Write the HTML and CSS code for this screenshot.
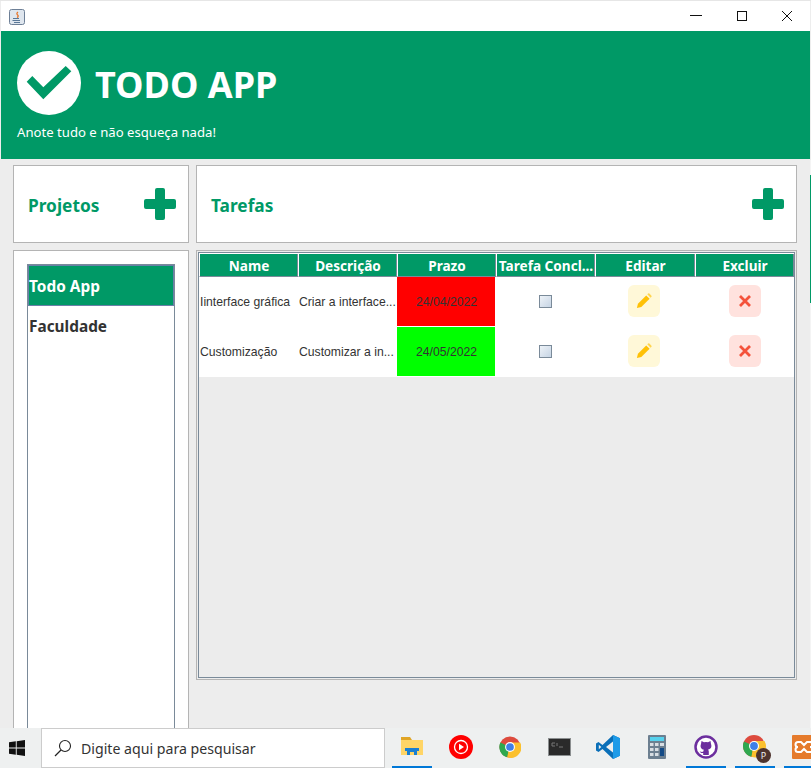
FILE: index.html
```html
<!DOCTYPE html>
<html lang="pt-BR">
<head>
  <meta charset="UTF-8">
  <meta name="viewport" content="width=device-width,initial-scale=1">
  <title>Todo App</title>
  <link rel="stylesheet" href="styles.css">
</head>
<body>

<div class="window">
  <div class="titlebar">
    <svg class="java-icon" width="16" height="16" viewBox="0 0 16 16">
      <rect x="0.5" y="0.5" width="15" height="15" rx="2" fill="#dfe6ee" stroke="#6d7f96"/>
      <path d="M9 3c-2 1.500-1 2.500 0 3.500.5.700 0 1.500-1 2" fill="none" stroke="#e8762c" stroke-width="1.300"/>
      <path d="M4 9.500h6M3.500 11.500h7.500M5 13.500h6" stroke="#5a7898" stroke-width="1"/>
    </svg>
    <div class="win-btns">
      <svg width="12" height="12" viewBox="0 0 12 12"><path d="M0 5.500h12" stroke="#111" stroke-width="1"/></svg>
      <svg width="10" height="10" viewBox="0 0 10 10"><rect x="0.500" y="0.500" width="9" height="9" fill="none" stroke="#111"/></svg>
      <svg width="10" height="10" viewBox="0 0 10 10"><path d="M0 0l10 10M10 0L0 10" stroke="#111" stroke-width="1"/></svg>
    </div>
  </div>

  <header class="app-header">
    <div class="brand">
      <svg width="64" height="64" viewBox="0 0 64 64">
        <circle cx="32" cy="32" r="32" fill="#fff"/>
        <path d="M9.700 30.700L15.300 25l11 11.300L48.700 15l5.600 5.300-28 28z" fill="#009966"/>
      </svg>
      <h1>TODO APP</h1>
    </div>
    <p class="slogan">Anote tudo e não esqueça nada!</p>
  </header>

  <main class="content">
    <section class="card card-head">
      <h2>Projetos</h2>
      <svg class="plus" width="32" height="32" viewBox="0 0 32 32"><path d="M11 2a2 2 0 0 1 2-2h6a2 2 0 0 1 2 2v9h9a2 2 0 0 1 2 2v6a2 2 0 0 1-2 2h-9v9a2 2 0 0 1-2 2h-6a2 2 0 0 1-2-2v-9H2a2 2 0 0 1-2-2v-6a2 2 0 0 1 2-2h9z" fill="#009966"/></svg>
    </section>
    <section class="card card-head">
      <h2>Tarefas</h2>
      <svg class="plus" width="32" height="32" viewBox="0 0 32 32"><path d="M11 2a2 2 0 0 1 2-2h6a2 2 0 0 1 2 2v9h9a2 2 0 0 1 2 2v6a2 2 0 0 1-2 2h-9v9a2 2 0 0 1-2 2h-6a2 2 0 0 1-2-2v-9H2a2 2 0 0 1-2-2v-6a2 2 0 0 1 2-2h9z" fill="#009966"/></svg>
    </section>

    <section class="card card-list">
      <ul class="project-list">
        <li class="selected">Todo App</li>
        <li>Faculdade</li>
      </ul>
    </section>

    <section class="table-col">
      <div class="table-frame">
        <table class="tasks">
          <thead>
            <tr><th>Name</th><th>Descrição</th><th>Prazo</th><th>Tarefa Concl...</th><th>Editar</th><th>Excluir</th></tr>
          </thead>
          <tbody>
            <tr>
              <td>Iinterface gráfica</td>
              <td>Criar a interface...</td>
              <td class="deadline late">24/04/2022</td>
              <td class="center"><span class="check"></span></td>
              <td class="center">
                <span class="action edit">
                  <svg width="16" height="16" viewBox="0 0 18 18"><path d="M1 17l1.200-5L11.500 2.700l3.800 3.800L6 15.800z" fill="#ffc107"/><path d="M12.700 1.500l1-.9a1 1 0 0 1 1.300 0l2.400 2.400a1 1 0 0 1 0 1.300l-1 1z" fill="#ffd54f"/></svg>
                </span>
              </td>
              <td class="center">
                <span class="action del">
                  <svg width="12" height="12" viewBox="0 0 12 12"><path d="M1 1l10 10M11 1L1 11" stroke="#f4523b" stroke-width="2.800"/></svg>
                </span>
              </td>
            </tr>
            <tr>
              <td>Customização</td>
              <td>Customizar a in...</td>
              <td class="deadline ok">24/05/2022</td>
              <td class="center"><span class="check"></span></td>
              <td class="center">
                <span class="action edit">
                  <svg width="16" height="16" viewBox="0 0 18 18"><path d="M1 17l1.200-5L11.500 2.700l3.800 3.800L6 15.800z" fill="#ffc107"/><path d="M12.700 1.500l1-.9a1 1 0 0 1 1.300 0l2.400 2.400a1 1 0 0 1 0 1.300l-1 1z" fill="#ffd54f"/></svg>
                </span>
              </td>
              <td class="center">
                <span class="action del">
                  <svg width="12" height="12" viewBox="0 0 12 12"><path d="M1 1l10 10M11 1L1 11" stroke="#f4523b" stroke-width="2.800"/></svg>
                </span>
              </td>
            </tr>
          </tbody>
        </table>
      </div>
    </section>
  </main>

  <footer class="taskbar">
    <svg class="win-logo" width="16" height="16" viewBox="0 0 16 16"><path d="M0 2.300l6.800-1v6.300H0zM7.700 1.200L16 0v7.600H7.700zM0 8.400h6.800v6.300l-6.800-1zM7.700 8.400H16V16l-8.300-1.200z" fill="#111"/></svg>
    <div class="search">
      <svg width="18" height="18" viewBox="0 0 18 18"><circle cx="11" cy="7" r="5.500" fill="none" stroke="#222" stroke-width="1.100"/><path d="M7 11l-6 6" stroke="#222" stroke-width="1.300"/></svg>
      <span>Digite aqui para pesquisar</span>
    </div>
    <div class="tray">
      <div class="app running">
        <svg width="22" height="20" viewBox="0 0 22 20"><path d="M0 0h9l2 3H0z" fill="#e0a526"/><path d="M0 3h22v15H0z" fill="#ffd566"/><path d="M4 11h14v3h-2v4h-3v-3H9v3H6v-4H4z" fill="#1a7fd1"/></svg>
      </div>
      <div class="app">
        <svg width="24" height="24" viewBox="0 0 24 24"><circle cx="12" cy="12" r="12" fill="#f00"/><circle cx="12" cy="12" r="6.500" fill="none" stroke="#fff" stroke-width="1.300"/><path d="M10 8.800v6.400l5-3.200z" fill="#fff"/></svg>
      </div>
      <div class="app">
        <svg width="22" height="22" viewBox="0 0 24 24"><circle cx="12" cy="12" r="11.500" fill="#dd4b3e"/><path d="M12 12L1.500 7A11.500 11.500 0 0 0 9 23.200z" fill="#2fa84f"/><path d="M12 7h11a11.500 11.500 0 0 1-14 16.200z" fill="#fbc02d"/><circle cx="12" cy="12" r="5.400" fill="#fff"/><circle cx="12" cy="12" r="4.200" fill="#3f7fe8"/></svg>
      </div>
      <div class="app">
        <svg width="23" height="18" viewBox="0 0 23 18"><rect x="0.500" y="0.500" width="22" height="17" fill="#2a2a2a" stroke="#8b8f90"/><path d="M4 5h3M4 5v3h3M9 5v3M11 9h4" stroke="#777" stroke-width="1" fill="none"/></svg>
      </div>
      <div class="app">
        <svg width="24" height="24" viewBox="0 0 24 24"><path d="M17 0l7 3.200v17.600L17 24 6.500 14l-4 3L0 15.500v-7L2.500 7l4 3z" fill="#0a6fb8"/><path d="M17 0l7 3.200v17.600L17 24z" fill="#1e9be8"/><path d="M17 6.500L10 12l7 5.500z" fill="#eef0f0"/><path d="M2.800 9.800v4.400L5.300 12z" fill="#eef0f0"/></svg>
      </div>
      <div class="app">
        <svg width="18" height="24" viewBox="0 0 18 24"><rect width="18" height="24" rx="1" fill="#6c7f90"/><rect x="2" y="2" width="14" height="4" fill="#56d2ee"/><path d="M2 8h3.500v3H2zM7 8h3.500v3H7zM2 13h3.500v3H2zM7 13h3.500v3H7zM2 18h3.500v3H2zM7 18h3.500v3H7zM12 8h4v3h-4z" fill="#d8dee3"/><rect x="12" y="13" width="4" height="8" fill="#134a86"/></svg>
      </div>
      <div class="app running">
        <svg width="24" height="24" viewBox="0 0 24 24"><circle cx="12" cy="12" r="10.500" fill="#fff" stroke="#6c2f9e" stroke-width="2.500"/><path d="M7 9l.5-3 2.500 1.300a8 8 0 0 1 4 0L16.500 6l.5 3c1 2.500.3 5-3 5.700.6.500.8 1 .8 2V20h-5.600v-2c-2 .4-3-.5-3.500-1.800 1 .5 1.800 1 3.500.6 0-.8.300-1.500.8-2C6.700 14 6 11.500 7 9z" fill="#6c2f9e"/></svg>
      </div>
      <div class="app running">
        <svg width="24" height="24" viewBox="0 0 24 24"><circle cx="11" cy="11" r="11" fill="#dd4b3e"/><path d="M11 11L1 6.500A11 11 0 0 0 8.500 21.800z" fill="#2fa84f"/><path d="M11 6h10.500a11 11 0 0 1-13 15.800z" fill="#fbc02d"/><circle cx="11" cy="11" r="5" fill="#fff"/><circle cx="11" cy="11" r="3.900" fill="#3f7fe8"/></svg>
        <span class="profile">P</span>
      </div>
      <div class="app running">
        <svg width="24" height="24" viewBox="0 0 24 24"><rect width="24" height="24" rx="1" fill="#e57b2c"/><path d="M6 7h3l3 3 3-3h3a2 2 0 0 1 0 5 2 2 0 0 1 0 5h-3l-3-3-3 3H6a2 2 0 0 1 0-5 2 2 0 0 1 0-5z" fill="none" stroke="#fff" stroke-width="2"/></svg>
      </div>
    </div>
  </footer>
</div>

<div class="desk-strip"></div>

</body>
</html>
```

FILE: styles.css
```css
* {
  box-sizing: border-box;
}

html, body {
  margin: 0;
  height: 100%;
  overflow: hidden;
}

body {
  background: #ededed;
  font-family: "Noto Sans", "Open Sans", sans-serif;
}

.window {
  height: 768px;
  display: flex;
  flex-direction: column;
  padding-left: 1px;
  border-top: 1px solid #e6e6e6;
}

/* pedaco da area de trabalho que aparece atras da janela */
.desk-strip {
  position: absolute;
  top: 160px;
  right: 0;
  width: 1px;
  height: 568px;
  background: linear-gradient(#f4f4f4 15px, #009966 15px, #009966 143px, #f4f4f4 143px);
}

/* barra de titulo */
.titlebar {
  height: 30px;
  margin-right: 1px;
  background: #fff;
  display: flex;
  align-items: center;
  justify-content: space-between;
  padding: 0 18px 0 8px;
  flex-shrink: 0;
}

.java-icon {
  margin-top: 1px;
}

.win-btns {
  display: flex;
  align-items: center;
  gap: 35px;
  margin-bottom: 1px;
}

/* cabecalho verde */
.app-header {
  height: 128px;
  margin-right: 1px;
  background: #009966;
  color: #fff;
  padding: 20px 16px 0;
  flex-shrink: 0;
}

.brand {
  display: flex;
  align-items: center;
  gap: 14px;
}

.brand h1 {
  margin: 0;
  padding-top: 4px;
  font-size: 36px;
  font-weight: 700;
  line-height: 60px;
}

.slogan {
  margin: 8px 0 0;
  font-size: 13.15px;
  line-height: 18px;
}

/* conteudo */
.content {
  flex: 1;
  min-height: 0;
  display: grid;
  grid-template-columns: 176px 601px;
  grid-template-rows: 78px 1fr;
  gap: 7px;
  padding: 6px 0 0 12px;
}

.card {
  background: #fff;
  border: 1px solid #b4b4b4;
}

.card-head {
  display: flex;
  align-items: center;
  justify-content: space-between;
  padding: 0 12px 0 14px;
}

.card-head h2 {
  margin: 0;
  padding-top: 2px;
  font-size: 17.3px;
  font-weight: 700;
  color: #009966;
}

.card-list {
  padding: 13px 13px 0;
  border-bottom: 0;
  display: flex;
}

.project-list {
  list-style: none;
  margin: 0;
  padding: 0;
  flex: 1;
  border: 1px solid #7a8a99;
  border-bottom: 0;
  font-size: 15.4px;
  font-weight: 700;
  color: #333;
}

.project-list li {
  height: 40px;
  line-height: 42px;
  padding-left: 1px;
}

.project-list .selected {
  background: #009966;
  color: #fff;
  border: 1px solid #6a80a8;
  line-height: 42px;
  padding-left: 0;
  height: 41px;
}

/* tabela */
.table-col {
  display: flex;
  flex-direction: column;
}

.table-frame {
  height: 430px;
  border: 1px solid #b4b4b4;
  background: #ececec;
  padding: 1px;
  position: relative;
}

.table-frame::before {
  content: "";
  position: absolute;
  inset: 1px;
  border: 1px solid #7a8a99;
  pointer-events: none;
}

.tasks {
  width: 595px;
  margin: 1px 0 0 1px;
  border-collapse: separate;
  border-spacing: 0;
  table-layout: fixed;
  position: relative;
  font-family: "Liberation Sans", Arial, sans-serif;
  font-size: 12.2px;
  color: #333;
}

.tasks th {
  width: 99px;
  height: 24px;
  padding: 1px 0 0;
  background: #009966;
  color: #fff;
  font-family: "Noto Sans", "Open Sans", sans-serif;
  font-size: 13.6px;
  font-weight: 700;
  text-align: center;
  white-space: nowrap;
  border-top: 1px solid #fff;
  border-left: 1px solid #fff;
  border-bottom: 1px solid #7a8a99;
  box-shadow: inset -1px 0 0 #7a8a99;
}

.tasks th:nth-child(5) {
  width: 100px;
}

.tasks td {
  height: 50px;
  padding: 0 0 0 1px;
  background: #fff;
  white-space: nowrap;
  overflow: hidden;
}

.tasks .center {
  text-align: center;
  padding: 0;
}

.tasks .deadline {
  text-align: center;
  padding: 0;
  box-shadow: inset -1px -1px 0 #fff;
}

.late {
  background: #f00 !important;
}

.ok {
  background: #0f0 !important;
}

.check {
  display: inline-block;
  width: 13px;
  height: 13px;
  margin-bottom: 1px;
  vertical-align: middle;
  border: 1px solid #7a8a99;
  background: linear-gradient(135deg, #eef3f8, #c6d4e4);
}

.action {
  width: 32px;
  height: 32px;
  margin-bottom: 2px;
  border-radius: 6px;
  display: inline-flex;
  align-items: center;
  justify-content: center;
  vertical-align: middle;
}

.edit {
  background: #fff8d8;
  margin-right: 2px;
}

.del {
  background: #ffe2de;
}

/* barra de tarefas */
.taskbar {
  height: 40px;
  position: relative;
  flex-shrink: 0;
  margin-left: -1px;
  background: #eef0f0;
  display: flex;
  align-items: center;
}

.win-logo {
  margin: 0 16px 0 9px;
  flex-shrink: 0;
}

.search {
  width: 344px;
  height: 40px;
  background: #fff;
  border: 1px solid #ccc;
  display: flex;
  align-items: center;
  gap: 9px;
  padding-left: 12px;
  font-size: 14.15px;
  color: #333;
  flex-shrink: 0;
}

.tray {
  display: flex;
  margin-left: 7px;
  gap: 9px;
}

.app {
  width: 40px;
  height: 40px;
  display: flex;
  align-items: center;
  justify-content: center;
  position: relative;
  flex-shrink: 0;
  padding-bottom: 2px;
}

.app.running {
  border-bottom: 2px solid #0078d7;
  padding-bottom: 0;
}

.profile {
  position: absolute;
  right: 4px;
  bottom: 3px;
  width: 15px;
  height: 15px;
  border-radius: 50%;
  background: #4e342e;
  color: #eee;
  font-size: 9px;
  line-height: 15px;
  text-align: center;
}
```
